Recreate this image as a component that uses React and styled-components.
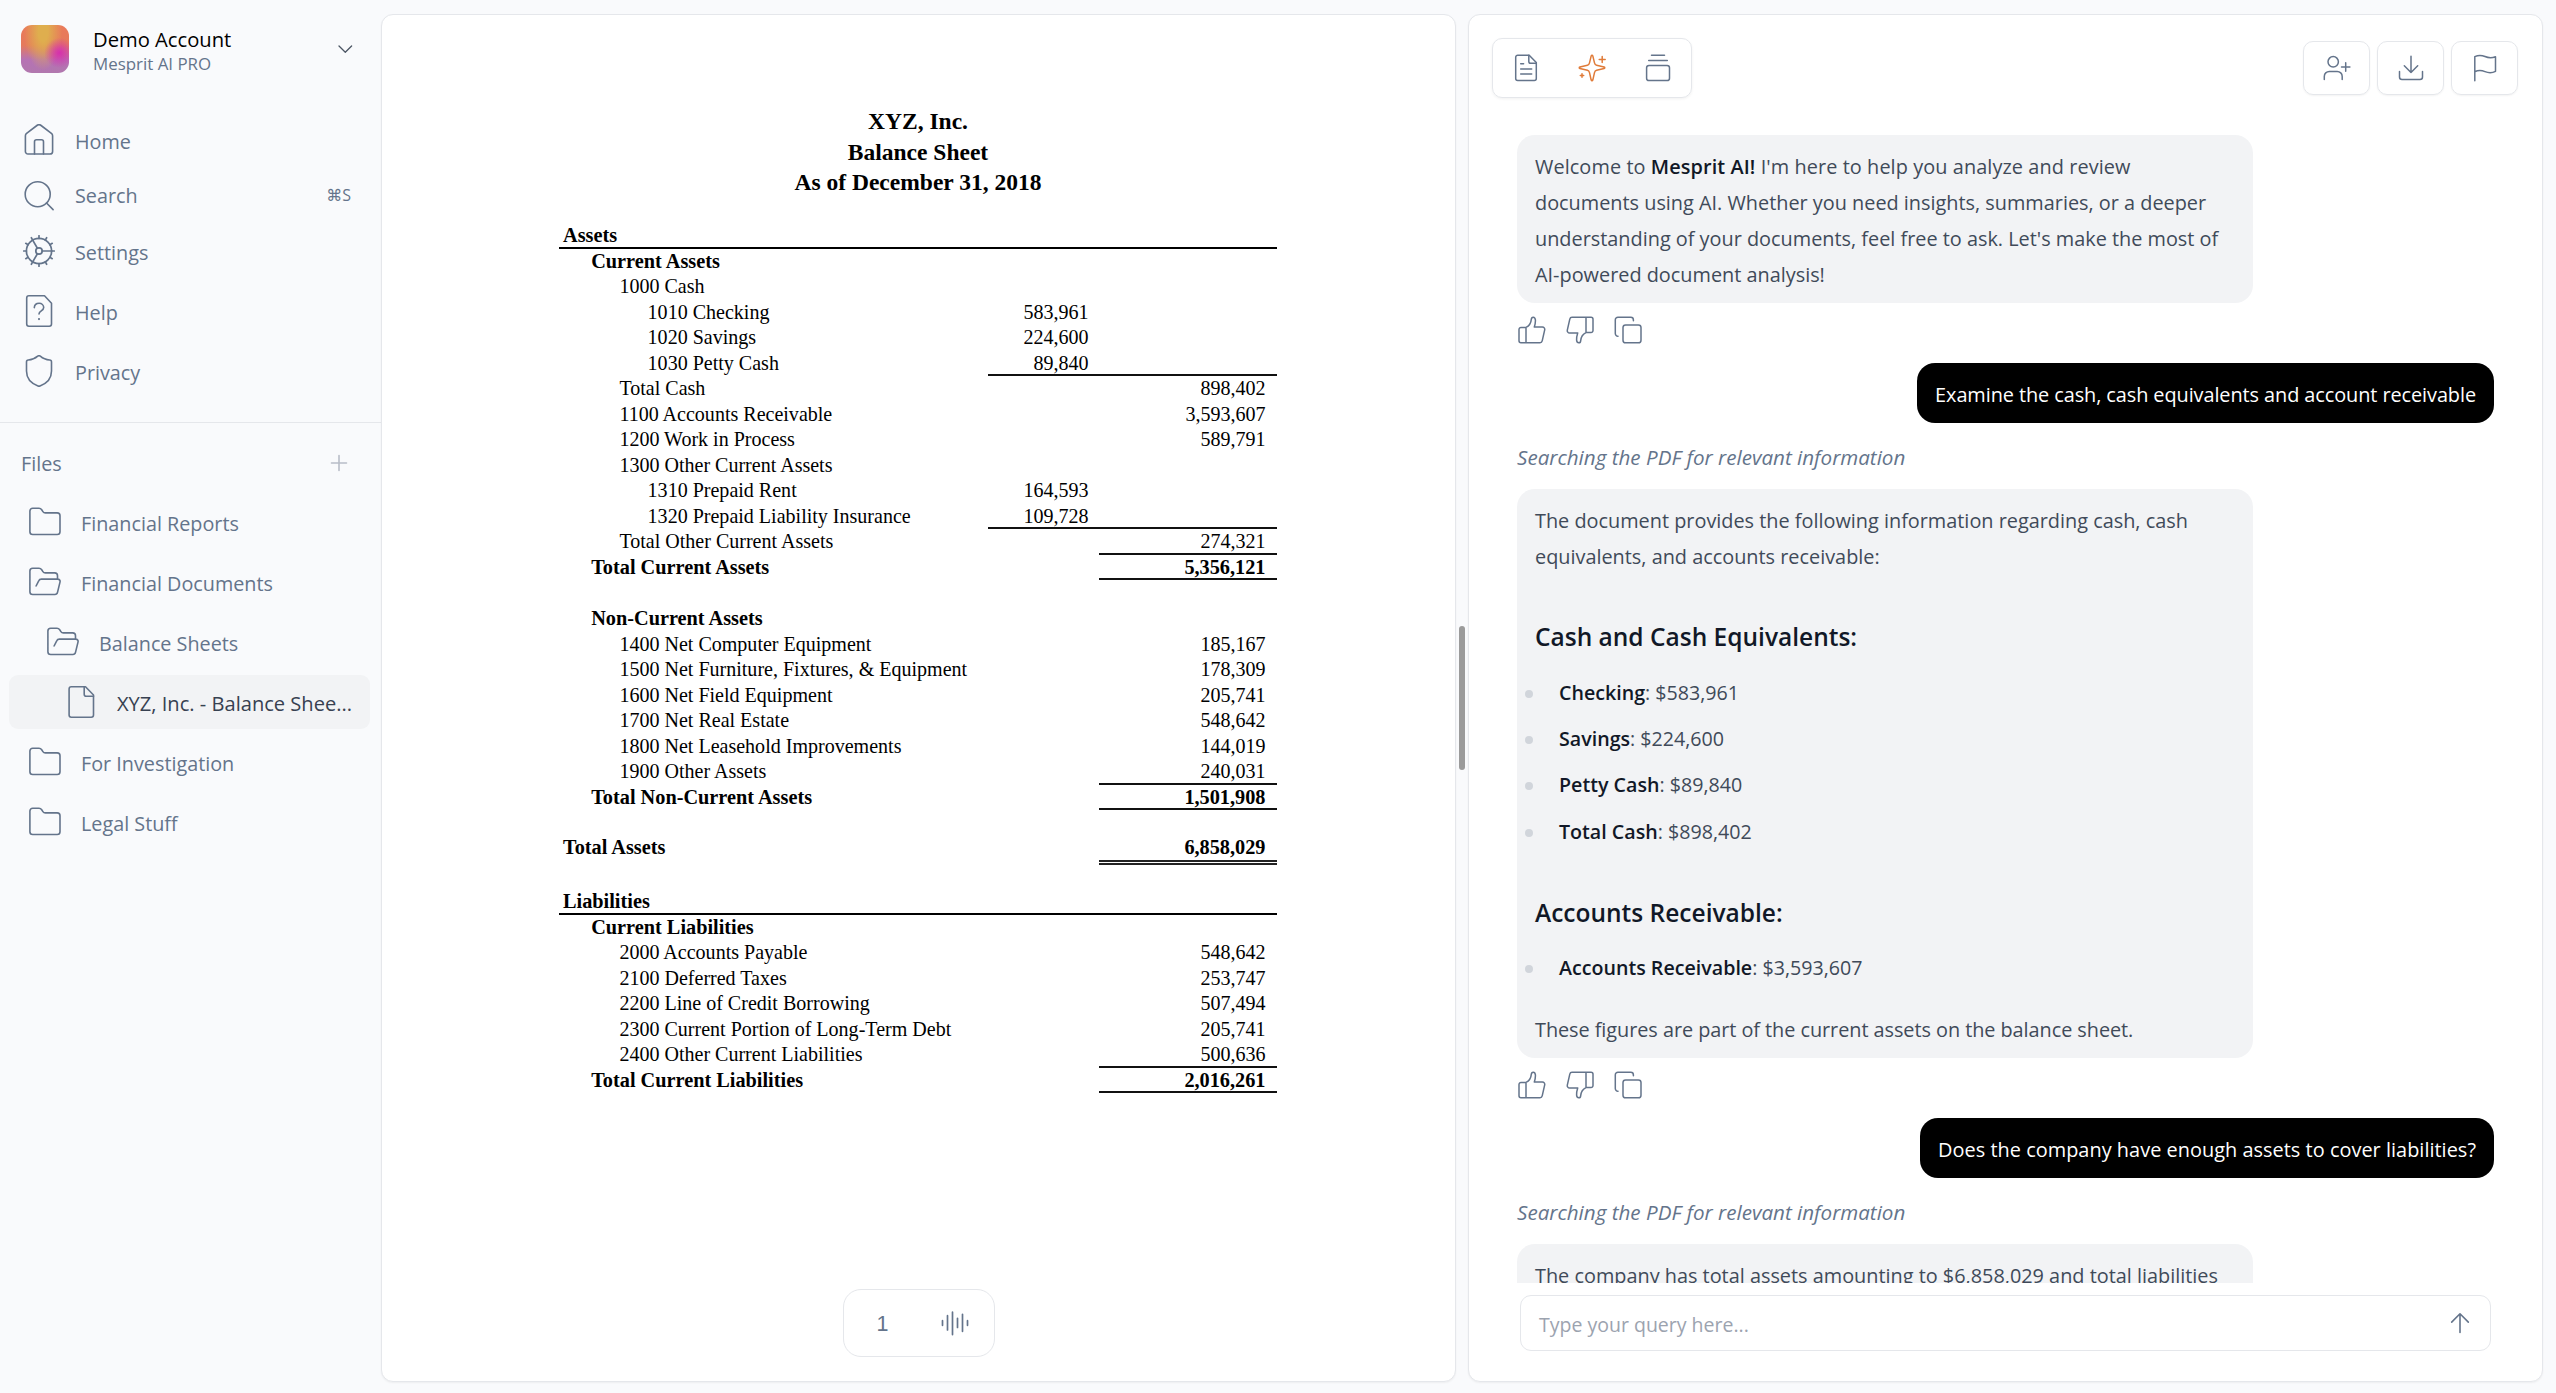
import React from "react";
import styled, { createGlobalStyle } from "styled-components";

const sans = `"Open Sans", "Noto Sans", sans-serif`;
const serif = `"Liberation Serif", "Times New Roman", serif`;
const slate = "#64748b";
const line = "#e5e7eb";

const GlobalStyle = createGlobalStyle`
  *, *::before, *::after { box-sizing: border-box; }
  body { margin: 0; background: #f9fafc; font-family: ${sans}; font-size: 19.8px; color: #404a59; }
  p, h3, ul, li { margin: 0; padding: 0; list-style: none; }
  button { font: inherit; color: inherit; background: none; border: 0; padding: 0; }
`;

/* ---------- icons ---------- */

const Svg = styled.svg`
  display: block;
  flex: none;
  width: ${(p) => p.$size}px;
  height: ${(p) => p.$size}px;
  fill: none;
  stroke: ${(p) => p.$color || slate};
  stroke-width: ${(p) => p.$weight || 1.6};
  stroke-linecap: round;
  stroke-linejoin: round;
`;

const Icon = ({ size = 28, color, weight, children }) => (
  <Svg viewBox={`0 0 ${size} ${size}`} $size={size} $color={color} $weight={weight} aria-hidden="true">
    {children}
  </Svg>
);

const HomeIcon = () => (
  <Icon size={32}>
    <path d="M13.9 1.5 3.6 9.4a3 3 0 0 0-1.2 2.4v15.6a2.6 2.6 0 0 0 2.6 2.6h22a2.6 2.6 0 0 0 2.6-2.6V11.800a3 3 0 0 0-1.2-2.4L18.100 1.500a3.400 3.400 0 0 0-4.200 0z" />
    <path d="M11.500 30V17.800a2 2 0 0 1 2-2h5a2 2 0 0 1 2 2V30" />
  </Icon>
);
const SearchIcon = () => (
  <Icon size={32}>
    <circle cx="14.7" cy="14.2" r="12.5" />
    <path d="m23.500 23 6.600 6.600" />
  </Icon>
);
const SettingsIcon = () => (
  <Icon size={32} weight={1.7}>
    <circle cx="16" cy="16" r="12.600" />
    <circle cx="16" cy="16" r="3.200" />
    {Array.from({ length: 12 }, (_, i) => (
      <path key={i} d="M28.600 16h2.700" transform={`rotate(${i * 30} 16 16)`} />
    ))}
    {[0, 120, 240].map((a) => (
      <path key={a} d="M19.200 16h9.400" transform={`rotate(${a} 16 16)`} />
    ))}
  </Icon>
);
const HelpIcon = () => (
  <Icon size={32}>
    <path d="M5.900 .8H21.500L28.500 8.200V29a2.200 2.200 0 0 1-2.200 2.200H5.900A2.200 2.200 0 0 1 3.700 29V3A2.200 2.200 0 0 1 5.900 .8z" />
    <path d="M11.300 12.600c.2-2.600 2.200-4.300 4.800-4.300 2.600 0 4.600 1.800 4.600 4.300 0 3.300-4.700 3.300-4.700 6.400" />
    <path d="M16 24.100h.01" strokeWidth="2.100" />
  </Icon>
);
const ShieldIcon = () => (
  <Icon size={32}>
    <path d="M14.700 1.200a1.900 1.900 0 0 1 2.600 0c2.500 2.200 5.400 3.600 9.400 3.800a1.900 1.900 0 0 1 1.800 1.900V16c0 7.400-4.200 12.200-11.500 14.900a2.700 2.700 0 0 1-2 0C7.700 28.200 3.500 23.400 3.500 16V6.900A1.900 1.900 0 0 1 5.300 5c4-.2 6.900-1.600 9.400-3.800z" />
  </Icon>
);
const FolderIcon = () => (
  <Icon size={32}>
    <path d="M3.700 2.300h6.300c1.200 0 2 .5 2.700 1.500l1.200 1.800c.6.900 1.300 1.300 2.400 1.300h11.900a2.800 2.800 0 0 1 2.800 2.800v16a2.800 2.800 0 0 1-2.800 2.800H3.700A2.800 2.800 0 0 1 .9 25.700V5.100a2.800 2.800 0 0 1 2.800-2.800z" />
  </Icon>
);
const FolderOpenIcon = () => (
  <Icon size={32}>
    <path d="M28.500 13V9.700a2.800 2.800 0 0 0-2.800-2.800h-9.400c-1.100 0-1.800-.4-2.400-1.300l-1.200-1.800c-.7-1-1.500-1.500-2.700-1.500H3.700A2.800 2.800 0 0 0 .9 5.100v20.600a2.800 2.800 0 0 0 2.800 2.800h22.200c1.300 0 2.300-.8 2.600-2.100l2.500-10.300c.4-1.700-.6-3-2.300-3H12.400c-1.300 0-2.200.6-2.700 1.700L7.100 20" />
  </Icon>
);
const FileIcon = () => (
  <Icon size={32}>
    <path d="M6.300 .8H20.500L28.500 9V29a2.200 2.200 0 0 1-2.200 2.200H6.300A2.200 2.200 0 0 1 4.100 29V3A2.200 2.200 0 0 1 6.300 .8z" />
    <path d="M19.200 .8v7.400a2 2 0 0 0 2 2h7.300" />
  </Icon>
);
const ChevronIcon = () => (
  <Icon size={16} color="#4b5563" weight={1.3}>
    <path d="m2 5 6.300 6.200 6.300-6.200" />
  </Icon>
);
const PlusIcon = () => (
  <Icon size={18} color="#b8bdc7" weight={1.6}>
    <path d="M9 1.500v15M1.500 9h15" />
  </Icon>
);
const DocumentIcon = () => (
  <Icon weight={1.5}>
    <path d="M5.700 1.200H17.200L24.300 8.600V24.500a2 2 0 0 1-2 2H5.700a2 2 0 0 1-2-2V3.200a2 2 0 0 1 2-2z" />
    <path d="M16.800 1.200v6.200a1.800 1.800 0 0 0 1.800 1.800h5.600M8.700 9.800h2.900M8.700 15h11M8.700 20.100h11" />
  </Icon>
);
const SparkleIcon = () => (
  <Icon color="#e07b39" weight={1.5}>
    <path d="M13.200 1.900c.3-.9 1.300-.9 1.600 0l1.700 7c.3 1.200.9 2 2.100 2.300l7.500 1.700c.9.300.9 1.400 0 1.700l-7.500 1.700c-1.200.3-1.800 1.100-2.100 2.300l-1.700 7.500c-.3.900-1.300.9-1.600 0l-1.700-7.500c-.3-1.200-.9-2-2.100-2.300l-7.500-1.700c-.9-.3-.9-1.400 0-1.700l7.500-1.700c1.200-.3 1.800-1.100 2.100-2.300z" />
    <path d="M24.200 2.500v6M21.200 5.500h6M4 19.800v3.400M2.300 21.500h3.400" />
  </Icon>
);
const StackIcon = () => (
  <Icon weight={1.5}>
    <path d="M7.500 1.300h13M4.700 6.400h18.600" />
    <rect x="2.600" y="11.400" width="22.900" height="15.200" rx="2.400" />
  </Icon>
);
const UserPlusIcon = () => (
  <Icon weight={1.5}>
    <circle cx="10.200" cy="7.800" r="5.200" />
    <path d="M1.300 25.600v-3.200a5 5 0 0 1 5-5h7.900a5 5 0 0 1 5 5v3.200M22.700 8.800v8.400M18.500 13h8.400" />
  </Icon>
);
const DownloadIcon = () => (
  <Icon weight={1.5}>
    <path d="M14 2.200v16.200M7.300 11.800l6.700 6.700 6.700-6.700M2.500 17.600v5.300a2.500 2.500 0 0 0 2.500 2.500h18a2.500 2.500 0 0 0 2.500-2.500v-5.300" />
  </Icon>
);
const FlagIcon = () => (
  <Icon weight={1.5}>
    <path d="M3.800 26.800V2.600C8 .6 11 1.200 14 2.500s6.500 1.800 10.500.2v14.600c-4 2.100-7.500 1.500-10.500.3s-6-1.900-10.200.1" />
  </Icon>
);
const ThumbUpIcon = ({ flip }) => (
  <Icon weight={1.5}>
    <g transform={flip ? "rotate(180 14 14)" : undefined}>
      <path d="M8 11.400c3.400-1.600 5-4.600 5.300-8 .2-3 3.700-3.100 4.100.4.200 2.600-.4 5-1.100 7.200h8.100a2.400 2.400 0 0 1 2.300 2.900l-2.500 11a2.300 2.300 0 0 1-2.200 1.800H3a2 2 0 0 1-2-2V13.400a2 2 0 0 1 2-2h5v15.300" />
    </g>
  </Icon>
);
const CopyIcon = () => (
  <Icon weight={1.5}>
    <rect x="9" y="9" width="18" height="17.800" rx="2.600" />
    <path d="M4 20.200a2.600 2.600 0 0 1-2.700-2.600V3.900a2.600 2.600 0 0 1 2.600-2.600h12.900a2.600 2.600 0 0 1 2.600 2.600v.9" />
  </Icon>
);
const VoiceIcon = () => (
  <Icon weight={1.7}>
    <path d="M1.500 11.700v4.600M6.500 6.700v14.200M11.500 3.200v22.400M16.500 9.300v9.200M21.500 5.300v17M26.500 11.700v4.600" />
  </Icon>
);
const ArrowUpIcon = () => (
  <Icon size={24} weight={1.6}>
    <path d="M12 21.500V2.800M3.700 11.100 12 2.800l8.300 8.300" />
  </Icon>
);

/* ---------- frame ---------- */

const Page = styled.div`
  display: flex;
  width: 2556px;
  height: 1393px;
  padding-right: 13px;
  overflow: hidden;
`;

const Sidebar = styled.aside`
  width: 381px;
  flex: none;
  display: flex;
  flex-direction: column;
  color: ${slate};
`;

const Account = styled.header`
  display: flex;
  align-items: center;
  height: 98px;
  padding: 0 28px 0 21px;
`;

const Avatar = styled.div`
  width: 48px;
  height: 48px;
  border-radius: 11px;
  background:
    radial-gradient(circle at 80% 58%, #d62fae 0, rgba(214, 47, 174, 0) 32%),
    radial-gradient(ellipse 40% 80% at 46% 14%, #dfae4e 25%, rgba(223, 174, 78, 0) 100%),
    linear-gradient(180deg, #ea7a5a 0, #e57a5c 42%, #b672b4 72%, #b177ae 100%);
`;

const AccountText = styled.div`
  flex: 1;
  margin-left: 24px;
  padding-top: 1px;
`;

const AccountName = styled.div`
  font-size: 20.200px;
  line-height: 28px;
  color: #000;
`;

const AccountPlan = styled.div`
  font-size: 16.900px;
  line-height: 22px;
`;

const Nav = styled.nav`
  display: flex;
  flex-direction: column;
  gap: 6px;
  height: 324px;
  padding: 15px 0 0 23px;
`;

const NavRow = styled.a`
  display: flex;
  align-items: center;
  height: ${(p) => p.$height || 54}px;
  padding-right: 30px;
`;

const NavLabel = styled.span`
  flex: 1;
  margin-left: 20px;
  line-height: 26px;
  padding-top: ${(p) => (p.$raised ? 0 : 3)}px;
`;

const Shortcut = styled.kbd`
  font-family: ${sans}, "DejaVu Sans";
  font-size: 16px;
  line-height: 22px;
  padding-bottom: 2px;
`;

const FilesHeader = styled.div`
  display: flex;
  align-items: center;
  justify-content: space-between;
  height: 73px;
  border-top: 1px solid ${line};
  padding: 7px 33px 0 21px;
`;

const FilesTitle = styled.span`
  padding-top: 2px;
`;

const FileTree = styled.div`
  display: flex;
  flex-direction: column;
  gap: 6px;
  padding: 0 11px 0 9px;
`;

const FileRow = styled.div`
  display: flex;
  align-items: center;
  gap: 20px;
  height: 54px;
  border-radius: 9px;
  padding: 0 10px 0 ${(p) => 20 + p.$depth * 18}px;
  background: ${(p) => (p.$active ? "#f2f3f5" : "transparent")};
  color: ${(p) => (p.$active ? "#374151" : slate)};
  font-size: ${(p) => (p.$active ? 20.1 : 19.8)}px;
`;

const FileName = styled.span`
  white-space: nowrap;
  padding-top: 2px;
`;

const Panel = styled.section`
  display: flex;
  flex-direction: column;
  flex: 1 1 0;
  height: 1368px;
  margin-top: 14px;
  border: 1px solid ${line};
  border-radius: 12px;
  background: #fff;
  box-shadow: 0 1px 2px rgba(0, 0, 0, 0.05);
`;

const Splitter = styled.div`
  width: 12px;
  flex: none;
  display: flex;
  align-items: center;
  justify-content: center;
`;

const SplitterHandle = styled.div`
  width: 6px;
  height: 144px;
  margin-top: 3px;
  border-radius: 3px;
  background: #9b9b9b;
`;

/* ---------- balance sheet ---------- */

const Sheet = styled.div`
  flex: 1;
  width: 718px;
  margin-left: 177px;
  padding-top: 91px;
  font-family: ${serif};
  font-size: 20px;
  color: #000;
`;

const SheetTitle = styled.div`
  text-align: center;
  font-weight: 700;
  font-size: 23.5px;
  line-height: 30.6px;
  margin-bottom: 25.2px;
`;

const SheetRow = styled.div`
  display: grid;
  grid-template-columns: 429px 110.500px 178.500px;
  height: ${(p) => p.$height || 25.5}px;
  line-height: 24.900px;
  font-size: ${(p) => (p.$bold ? 20.3 : 20.05)}px;
  font-weight: ${(p) => (p.$bold ? 700 : 400)};
  box-shadow: ${(p) => (p.$ruled ? "inset 0 -2px #000" : "none")};
`;

const SheetLabel = styled.div`
  padding-left: ${(p) => 4 + p.$indent * 28.2}px;
  white-space: nowrap;
`;

const SheetAmount = styled.div`
  text-align: right;
  padding-right: ${(p) => p.$pad || 11.5}px;
  box-shadow: ${(p) => (p.$rule === "single" ? "inset 0 -2px #111" : "none")};
  border-bottom: ${(p) => (p.$rule === "double" ? "5px double #222" : "0")};
`;

const SheetGap = styled.div`
  height: ${(p) => p.$height}px;
`;

const Pager = styled.div`
  display: flex;
  align-items: center;
  justify-content: space-between;
  align-self: center;
  width: 152px;
  height: 68px;
  margin-bottom: 24px;
  padding: 0 25px 0 33px;
  border: 1px solid ${line};
  border-radius: 18px;
  font-family: "Liberation Sans", Arial, sans-serif;
  font-size: 21.5px;
  color: ${slate};
`;

const PageNumber = styled.span`
  padding-top: 2px;
`;

/* ---------- chat ---------- */

const ChatHeader = styled.div`
  display: flex;
  justify-content: space-between;
  align-items: center;
  padding: 23px 24px 0 23px;
`;

const TabGroup = styled.div`
  display: flex;
  align-items: center;
  justify-content: space-between;
  width: 200px;
  height: 60px;
  padding: 0 19px;
  border: 1px solid ${line};
  border-radius: 10px;
  box-shadow: 0 1px 3px rgba(0, 0, 0, 0.06);
`;

const ButtonGroup = styled.div`
  display: flex;
  gap: 7px;
`;

const ToolButton = styled.button`
  display: flex;
  align-items: center;
  justify-content: center;
  width: 67px;
  height: 54px;
  border: 1px solid ${line};
  border-radius: 10px;
  box-shadow: 0 1px 2px rgba(0, 0, 0, 0.05);
`;

const Messages = styled.div`
  display: flex;
  flex-direction: column;
  align-items: flex-start;
  height: 1148px;
  margin-top: 37px;
  padding: 0 48px;
  overflow: hidden;
`;

const Answer = styled.div`
  flex: none;
  width: 736px;
  padding: 14px 18px 10px;
  border-radius: 18px;
  background: #f2f3f5;
  font-size: 19.870px;
  line-height: 36px;
  strong { font-weight: 600; color: #111827; }
`;

const AnswerText = styled.p`
  margin-top: ${(p) => p.$top || 0}px;
  letter-spacing: ${(p) => p.$tracking || 0}px;
  white-space: nowrap;
`;

const AnswerHeading = styled.h3`
  margin-top: ${(p) => p.$top}px;
  font-size: 24.500px;
  line-height: 36px;
  font-weight: 600;
  color: #111827;
`;

const FactList = styled.ul`
  display: flex;
  flex-direction: column;
  gap: 10.200px;
  margin-top: ${(p) => p.$top}px;
  font-size: 19.650px;
`;

const Fact = styled.li`
  display: flex;
  align-items: center;
  margin-left: -10px;
  white-space: pre;
  &::before {
    content: "";
    width: 8px;
    height: 8px;
    margin: 2px 26px 0 0;
    border-radius: 50%;
    background: #d1d5db;
  }
`;

const Reactions = styled.div`
  flex: none;
  display: flex;
  gap: 20px;
  height: 60px;
  padding: 13px 0 0 1px;
`;

const Question = styled.div`
  flex: none;
  align-self: flex-end;
  height: 60px;
  padding: 0 18px;
  border-radius: 18px;
  background: #000;
  color: #fff;
  font-size: 19.900px;
  letter-spacing: ${(p) => p.$tracking || 0}px;
  line-height: 63px;
`;

const Status = styled.p`
  flex: none;
  height: 66px;
  padding-top: 18px;
  font-size: 20.600px;
  font-style: italic;
  line-height: 32px;
  color: ${slate};
`;

const QueryBox = styled.div`
  display: flex;
  align-items: center;
  justify-content: space-between;
  height: 56px;
  margin: 12px 51px 0;
  padding: 0 18px;
  border: 1px solid ${line};
  border-radius: 11px;
  font-size: 19.500px;
  color: #9ca3af;
`;

const Placeholder = styled.span`
  padding-top: 2px;
`;

/* ---------- data ---------- */

const navItems = [
  { label: "Home", icon: HomeIcon },
  { label: "Search", icon: SearchIcon, shortcut: "⌘S", height: 45 },
  { label: "Settings", icon: SettingsIcon },
  { label: "Help", icon: HelpIcon },
  { label: "Privacy", icon: ShieldIcon },
];

const files = [
  { name: "Financial Reports", icon: FolderIcon, depth: 0 },
  { name: "Financial Documents", icon: FolderOpenIcon, depth: 0 },
  { name: "Balance Sheets", icon: FolderOpenIcon, depth: 1 },
  { name: "XYZ, Inc. - Balance Shee...", icon: FileIcon, depth: 2, active: true },
  { name: "For Investigation", icon: FolderIcon, depth: 0 },
  { name: "Legal Stuff", icon: FolderIcon, depth: 0 },
];

const sheetRows = [
  { label: "Assets", indent: 0, bold: true, ruled: true, height: 26 },
  { label: "Current Assets", indent: 1, bold: true },
  { label: "1000 Cash", indent: 2 },
  { label: "1010 Checking", indent: 3, sub: "583,961" },
  { label: "1020 Savings", indent: 3, sub: "224,600" },
  { label: "1030 Petty Cash", indent: 3, sub: "89,840", subRule: "single", rule: "single" },
  { label: "Total Cash", indent: 2, total: "898,402" },
  { label: "1100 Accounts Receivable", indent: 2, total: "3,593,607" },
  { label: "1200 Work in Process", indent: 2, total: "589,791" },
  { label: "1300 Other Current Assets", indent: 2 },
  { label: "1310 Prepaid Rent", indent: 3, sub: "164,593" },
  { label: "1320 Prepaid Liability Insurance", indent: 3, sub: "109,728", subRule: "single", rule: "single" },
  { label: "Total Other Current Assets", indent: 2, total: "274,321", rule: "single" },
  { label: "Total Current Assets", indent: 1, bold: true, total: "5,356,121", rule: "single" },
  { gap: 25.7 },
  { label: "Non-Current Assets", indent: 1, bold: true },
  { label: "1400 Net Computer Equipment", indent: 2, total: "185,167", height: 25.6 },
  { label: "1500 Net Furniture, Fixtures, & Equipment", indent: 2, total: "178,309" },
  { label: "1600 Net Field Equipment", indent: 2, total: "205,741", height: 25.6 },
  { label: "1700 Net Real Estate", indent: 2, total: "548,642" },
  { label: "1800 Net Leasehold Improvements", indent: 2, total: "144,019", height: 25.6 },
  { label: "1900 Other Assets", indent: 2, total: "240,031", rule: "single" },
  { label: "Total Non-Current Assets", indent: 1, bold: true, total: "1,501,908", rule: "single" },
  { gap: 24.5 },
  { label: "Total Assets", indent: 0, bold: true, total: "6,858,029", rule: "double", height: 29.2 },
  { gap: 25.1 },
  { label: "Liabilities", indent: 0, bold: true, ruled: true, height: 25.7 },
  { label: "Current Liabilities", indent: 1, bold: true },
  { label: "2000 Accounts Payable", indent: 2, total: "548,642" },
  { label: "2100 Deferred Taxes", indent: 2, total: "253,747" },
  { label: "2200 Line of Credit Borrowing", indent: 2, total: "507,494" },
  { label: "2300 Current Portion of Long-Term Debt", indent: 2, total: "205,741" },
  { label: "2400 Other Current Liabilities", indent: 2, total: "500,636", rule: "single" },
  { label: "Total Current Liabilities", indent: 1, bold: true, total: "2,016,261", rule: "single" },
];

const cashFacts = [
  ["Checking", "$583,961"],
  ["Savings", "$224,600"],
  ["Petty Cash", "$89,840"],
  ["Total Cash", "$898,402"],
];

const MessageReactions = () => (
  <Reactions>
    <ThumbUpIcon />
    <ThumbUpIcon flip />
    <CopyIcon />
  </Reactions>
);

const Facts = ({ items, top }) => (
  <FactList $top={top}>
    {items.map(([name, value]) => (
      <Fact key={name}>
        <span>
          <strong>{name}</strong>: {value}
        </span>
      </Fact>
    ))}
  </FactList>
);

export default function App() {
  return (
    <>
      <GlobalStyle />
      <Page>
        <Sidebar>
          <Account>
            <Avatar />
            <AccountText>
              <AccountName>Demo Account</AccountName>
              <AccountPlan>Mesprit AI PRO</AccountPlan>
            </AccountText>
            <ChevronIcon />
          </Account>
          <Nav>
            {navItems.map(({ label, icon: Glyph, shortcut, height }) => (
              <NavRow key={label} $height={height}>
                <Glyph />
                <NavLabel $raised={Boolean(shortcut)}>{label}</NavLabel>
                {shortcut && <Shortcut>{shortcut}</Shortcut>}
              </NavRow>
            ))}
          </Nav>
          <FilesHeader>
            <FilesTitle>Files</FilesTitle>
            <PlusIcon />
          </FilesHeader>
          <FileTree>
            {files.map(({ name, icon: Glyph, depth, active }) => (
              <FileRow key={name} $depth={depth} $active={active}>
                <Glyph />
                <FileName>{name}</FileName>
              </FileRow>
            ))}
          </FileTree>
        </Sidebar>

        <Panel>
          <Sheet>
            <SheetTitle>
              <div>XYZ, Inc.</div>
              <div>Balance Sheet</div>
              <div>As of December 31, 2018</div>
            </SheetTitle>
            {sheetRows.map((row, i) =>
              row.gap ? (
                <SheetGap key={i} $height={row.gap} />
              ) : (
                <SheetRow key={i} $bold={row.bold} $ruled={row.ruled} $height={row.height}>
                  <SheetLabel $indent={row.indent}>{row.label}</SheetLabel>
                  <SheetAmount $rule={row.subRule} $pad={10}>{row.sub}</SheetAmount>
                  <SheetAmount $rule={row.rule}>{row.total}</SheetAmount>
                </SheetRow>
              )
            )}
          </Sheet>
          <Pager>
            <PageNumber>1</PageNumber>
            <VoiceIcon />
          </Pager>
        </Panel>

        <Splitter>
          <SplitterHandle />
        </Splitter>

        <Panel>
          <ChatHeader>
            <TabGroup>
              <DocumentIcon />
              <SparkleIcon />
              <StackIcon />
            </TabGroup>
            <ButtonGroup>
              <ToolButton><UserPlusIcon /></ToolButton>
              <ToolButton><DownloadIcon /></ToolButton>
              <ToolButton><FlagIcon /></ToolButton>
            </ButtonGroup>
          </ChatHeader>
          <Messages>
            <Answer>
              <AnswerText $tracking={0.09}>
                Welcome to <strong>Mesprit AI!</strong> I'm here to help you analyze and review
              </AnswerText>
              <AnswerText>
                documents using AI. Whether you need insights, summaries, or a deeper<br />
                understanding of your documents, feel free to ask. Let's make the most of<br />
                AI-powered document analysis!
              </AnswerText>
            </Answer>
            <MessageReactions />
            <Question $tracking={-0.08}>Examine the cash, cash equivalents and account receivable</Question>
            <Status>Searching the PDF for relevant information</Status>
            <Answer>
              <AnswerText>
                The document provides the following information regarding cash, cash<br />
                equivalents, and accounts receivable:
              </AnswerText>
              <AnswerHeading $top={44}>Cash and Cash Equivalents:</AnswerHeading>
              <Facts top={20} items={cashFacts} />
              <AnswerHeading $top={45}>Accounts Receivable:</AnswerHeading>
              <Facts top={19} items={[["Accounts Receivable", "$3,593,607"]]} />
              <AnswerText $top={26} $tracking={-0.05}>
                These figures are part of the current assets on the balance sheet.
              </AnswerText>
            </Answer>
            <MessageReactions />
            <Question $tracking={0.03}>Does the company have enough assets to cover liabilities?</Question>
            <Status>Searching the PDF for relevant information</Status>
            <Answer>
              <AnswerText>The company has total assets amounting to $6,858,029 and total liabilities</AnswerText>
            </Answer>
          </Messages>
          <QueryBox>
            <Placeholder>Type your query here...</Placeholder>
            <ArrowUpIcon />
          </QueryBox>
        </Panel>
      </Page>
    </>
  );
}
